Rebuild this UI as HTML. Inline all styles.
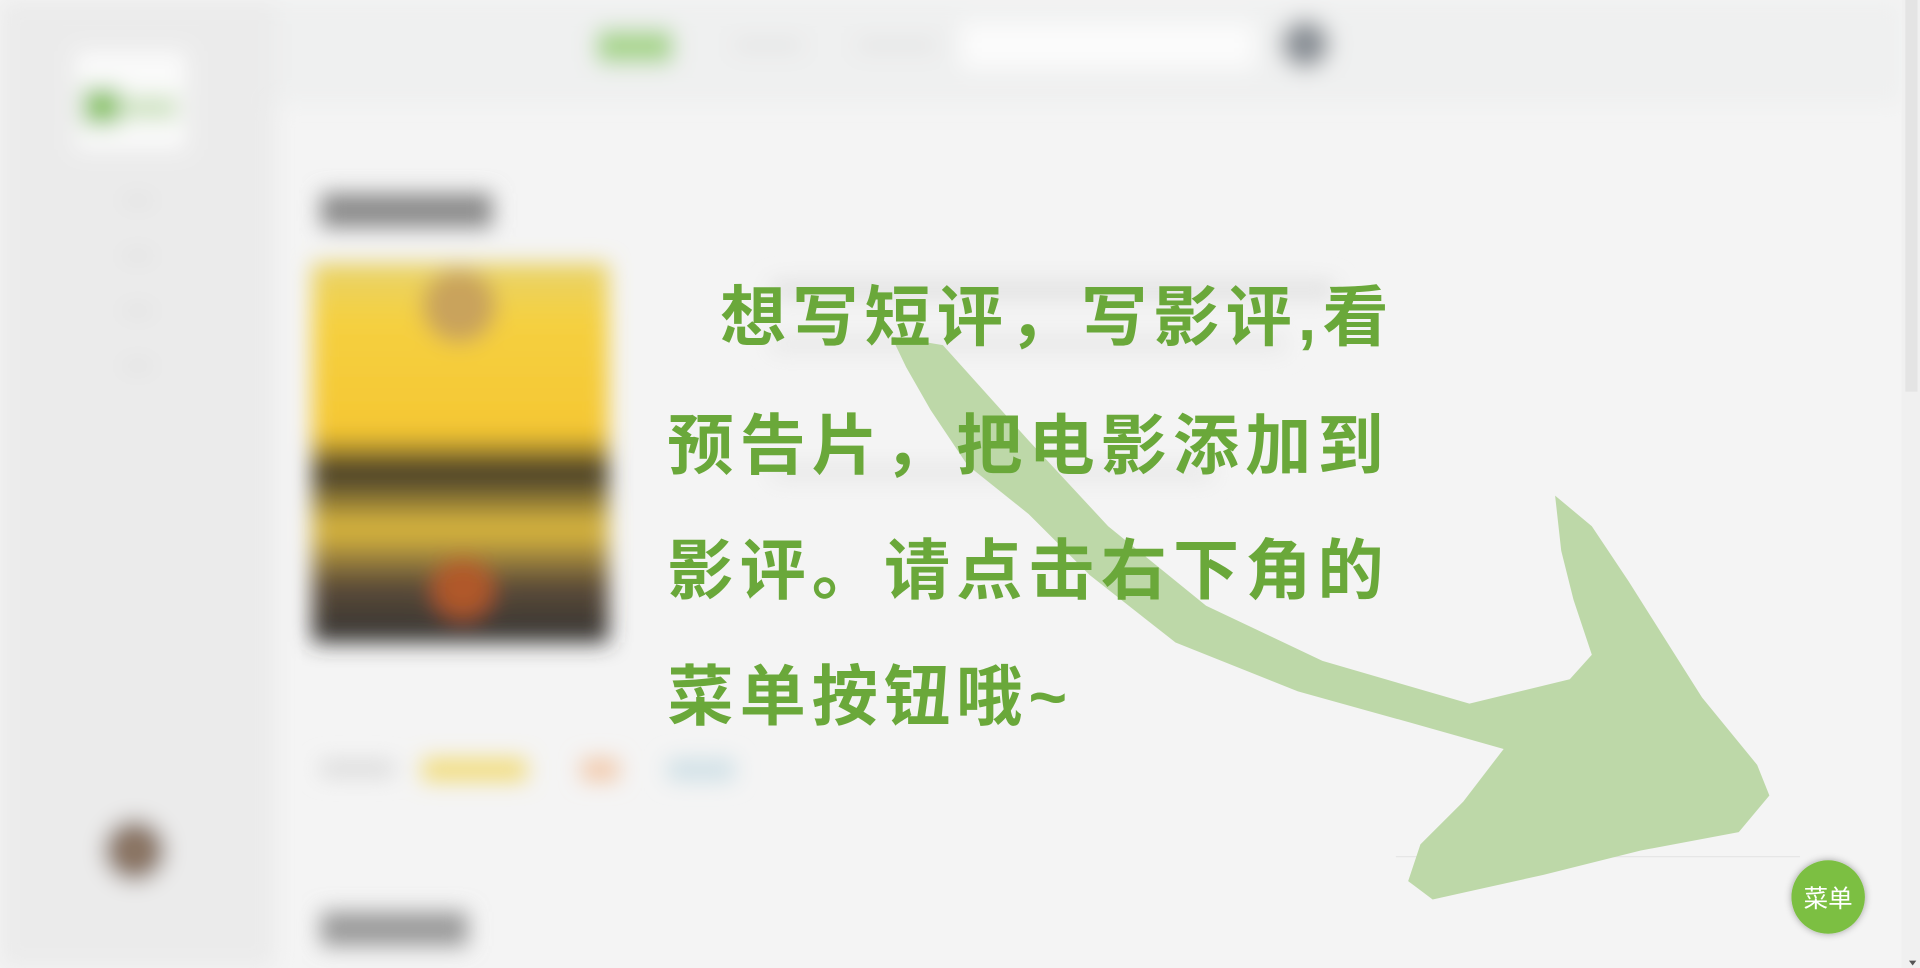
<!DOCTYPE html>
<html><head><meta charset="utf-8"><style>
html,body{margin:0;padding:0;width:1920px;height:968px;overflow:hidden;background:#f4f4f4}
svg{display:block}
</style></head><body>
<svg width="1920" height="968" viewBox="0 0 1568 791" preserveAspectRatio="none" xmlns="http://www.w3.org/2000/svg">
<defs>
<filter id="b" x="-20%" y="-20%" width="140%" height="140%"><feGaussianBlur stdDeviation="9"/></filter>
<linearGradient id="pg" x1="0" y1="0" x2="0" y2="1">
<stop offset="0" stop-color="#e8d36a"/><stop offset="0.15" stop-color="#f5d040"/><stop offset="0.45" stop-color="#f5c733"/><stop offset="0.55" stop-color="#3a3428"/><stop offset="0.7" stop-color="#e0bc40"/><stop offset="0.85" stop-color="#5a4a38"/><stop offset="1" stop-color="#333"/></linearGradient>
<filter id="sh" x="-50%" y="-50%" width="200%" height="200%"><feDropShadow dx="0" dy="0" stdDeviation="3" flood-color="#000" flood-opacity="0.35"/></filter>
</defs>
<rect width="1568" height="791" fill="#f4f4f4"/>
<g filter="url(#b)">
<rect x="0" y="0" width="225" height="791" fill="#ebebeb"/>
<rect x="225" y="0" width="1330" height="85" fill="#eff0f0"/>
<rect x="62" y="42" width="90" height="80" fill="#fafafa"/>
<rect x="68" y="72" width="30" height="30" fill="#8cc46a"/>
<rect x="100" y="78" width="45" height="20" fill="#cfe3c2"/>
<rect x="100" y="160" width="25" height="8" fill="#e0e0e0"/>
<rect x="100" y="205" width="25" height="8" fill="#e0e0e0"/>
<rect x="100" y="250" width="25" height="8" fill="#e0e0e0"/>
<rect x="100" y="295" width="25" height="8" fill="#e0e0e0"/>
<circle cx="110" cy="695" r="25" fill="#8a7464"/>
<rect x="487" y="24" width="63" height="28" rx="5" fill="#a9d68e"/>
<rect x="600" y="32" width="55" height="10" fill="#e3e3e3"/>
<rect x="700" y="32" width="65" height="10" fill="#e3e3e3"/>
<rect x="785" y="18" width="240" height="38" fill="#fbfbfb"/>
<circle cx="1066" cy="36" r="20" fill="#8c9298"/>
<rect x="262" y="158" width="140" height="28" fill="#8a8a8a"/>
<rect x="255" y="215" width="242" height="310" fill="url(#pg)"/>
<circle cx="375" cy="250" r="30" fill="#c9a35c"/>
<circle cx="378" cy="480" r="25" fill="#b0582a"/>
<rect x="630" y="230" width="460" height="14" fill="#e0e0e0"/>
<rect x="630" y="275" width="420" height="12" fill="#e6e6e6"/>
<rect x="630" y="380" width="360" height="12" fill="#e6e6e6"/>
<rect x="262" y="622" width="60" height="12" fill="#d8d8d8"/>
<rect x="345" y="620" width="85" height="18" fill="#f2dc78"/>
<rect x="475" y="620" width="30" height="18" fill="#f2c8a8"/>
<rect x="545" y="620" width="55" height="18" fill="#cfe0e6"/>
<rect x="262" y="745" width="120" height="28" fill="#9a9a9a"/>
</g>
<rect x="1553" y="0" width="15" height="791" fill="#f0f0f0"/>
<rect x="1556" y="0" width="10" height="320" fill="#e4e4e4"/>
<path d="M1559 785 L1565 785 L1562 789 Z" fill="#555"/>
<line x1="1140" y1="700" x2="1470" y2="700" stroke="#e6e6e6" stroke-width="1"/>
<path fill="#bdd8a8" d="M728 275 L770 282 L840 360 L905 430 L985 495 L1080 540 L1200 575 L1282 555 L1300 535 L1285 490 L1275 450 L1270 405 L1300 430 L1330 475 L1390 570 L1435 625 L1445 650 L1420 680 L1340 695 L1260 715 L1170 735 L1150 720 L1160 690 L1195 655 L1228 612 L1150 590 L1060 565 L960 525 L890 470 L840 420 L790 380 L760 335 L740 300 Z"/>
<text font-family="'Liberation Sans','Noto Sans CJK SC',sans-serif" font-weight="bold" font-size="54" fill="#6aa83a" letter-spacing="5">
<tspan x="588" y="278">想写短评，写影评,看</tspan>
<tspan x="545" y="383">预告片，把电影添加到</tspan>
<tspan x="545" y="485">影评。请点击右下角的</tspan>
<tspan x="545" y="588">菜单按钮哦~</tspan>
</text>
<circle cx="1493" cy="733" r="30" fill="#7bbf42" filter="url(#sh)"/>
<text x="1493" y="741" text-anchor="middle" font-family="'Liberation Sans','Noto Sans CJK SC',sans-serif" font-size="20" fill="#fff">菜单</text>
</svg>
</body></html>
